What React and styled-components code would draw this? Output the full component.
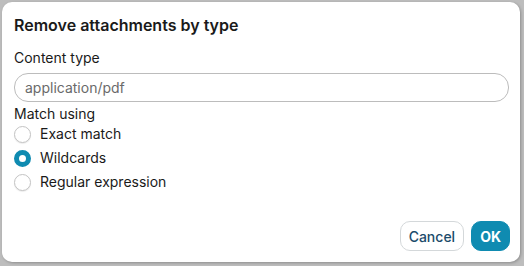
import React, { useState } from 'react';
import styled, { createGlobalStyle } from 'styled-components';

const GlobalStyle = createGlobalStyle`
  html, body {
    margin: 0;
    padding: 0;
    background: #b9b9b9;
  }
  body {
    font-family: Inter, "Noto Sans", sans-serif;
  }
`;

const Backdrop = styled("div")`
  width: 524px;
  height: 266px;
  padding: 2px 4px 4px 2px;
  box-sizing: border-box;
  background: #bdbdbd;
`;

const Dialog = styled("form")`
  height: 100%;
  box-sizing: border-box;
  background: #fff;
  border-radius: 10px;
  box-shadow: 1px 1px 3px rgba(0, 0, 0, 0.25);
  padding: 13px 10px 11px 12px;
  display: flex;
  flex-direction: column;
  color: #1a1a1a;
`;

const Title = styled("h1")`
  margin: 0 0 14px;
  font-size: 16px;
  font-weight: 600;
  line-height: 20px;
`;

const Label = styled("div")`
  font-size: 14px;
  line-height: 18px;
  margin-bottom: ${p => p.$tight ? "2px" : "6px"};
`;

const Input = styled("input")`
  height: 29px;
  box-sizing: border-box;
  border: 1px solid #bcbcbc;
  border-radius: 14px;
  padding: 0 10px;
  margin: 0 1px 3px 0;
  font-family: inherit;
  font-size: 14px;
  color: #555;
  outline: none;
  &::placeholder {
    color: #6a6a6a;
  }
`;

const RadioList = styled("div")`
  display: flex;
  flex-direction: column;
  gap: 6px;
`;

const RadioRow = styled("label")`
  display: flex;
  align-items: center;
  gap: 9px;
  font-size: 14px;
  line-height: 18px;
  cursor: pointer;
`;

const RadioDot = styled("span")`
  width: 17px;
  height: 17px;
  box-sizing: border-box;
  border-radius: 50%;
  border: ${p => p.$on ? "5px solid #0f8bb1" : "1px solid #c4c4c4"};
  background: #fff;
  box-shadow: ${p => p.$on ? "none" : "0 1px 1px rgba(0,0,0,0.08)"};
`;

const Footer = styled("div")`
  margin-top: auto;
  display: flex;
  justify-content: flex-end;
  gap: 7px;
`;

const Button = styled("button")`
  height: 30px;
  box-sizing: border-box;
  border-radius: 10px;
  font-family: inherit;
  font-size: 14px;
  font-weight: ${p => p.$primary ? 700 : 500};
  padding: 0 ${p => p.$primary ? "8px" : "8px"};
  border: 1px solid ${p => p.$primary ? "#0f8bb1" : "#d4d8da"};
  background: ${p => p.$primary ? "#0f8bb1" : "#fff"};
  color: ${p => p.$primary ? "#fff" : "#1b4b6b"};
  cursor: pointer;
`;

const options = ["Exact match", "Wildcards", "Regular expression"];

const App = () => {
  const [mode, setMode] = useState("Wildcards");

  return (
    <>
      <GlobalStyle />
      <Backdrop>
        <Dialog onSubmit={e => e.preventDefault()}>
          <Title>Remove attachments by type</Title>
          <Label>Content type</Label>
          <Input type="text" placeholder="application/pdf" />
          <Label $tight>Match using</Label>
          <RadioList>
            {options.map(o => (
              <RadioRow key={o} onClick={() => setMode(o)}>
                <RadioDot $on={mode === o} />
                {o}
              </RadioRow>
            ))}
          </RadioList>
          <Footer>
            <Button type="button">Cancel</Button>
            <Button $primary>OK</Button>
          </Footer>
        </Dialog>
      </Backdrop>
    </>
  );
};

export default App;
